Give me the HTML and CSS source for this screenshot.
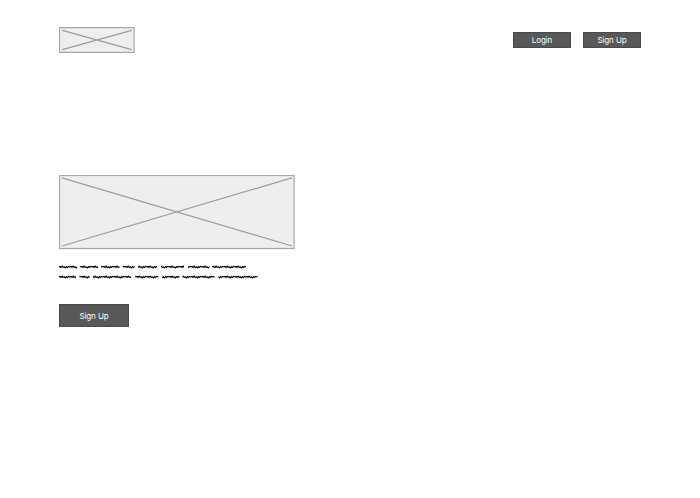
FILE: index.html
```html
<!DOCTYPE html>
<html lang="en">
<head>
<meta charset="utf-8">
<title>Landing wireframe</title>
<link rel="stylesheet" href="styles.css">
</head>
<body>
<header class="header">
  <svg class="logo" viewBox="0 0 76 26" aria-hidden="true">
    <rect class="box" x=".5" y=".6" width="74.6" height="24.8"/>
    <path class="cross" d="M3.3 3.3 72.7 22.7M3.3 22.7 72.7 3.3"/>
  </svg>
  <nav class="nav">
    <button class="btn">Login</button>
    <button class="btn">Sign Up</button>
  </nav>
</header>
<main class="main">
  <svg class="hero" viewBox="0 0 236 75" aria-hidden="true">
    <rect class="box" x=".5" y=".5" width="234.6" height="73"/>
    <path class="cross" d="M3 2.8 233 71M3 71 233 2.8"/>
  </svg>
  <svg class="scribble" viewBox="0 0 200 16" aria-hidden="true">
    <defs>
      <pattern id="wave" width="11" height="4" patternUnits="userSpaceOnUse">
        <path class="stroke" d="M-.5 2 1 1.5 2 2.4 3.2 1.2 4.2 2.3 5.4 2 6.4 2.9 7.6 1.6 8.6 2.4 9.6 1.3 11.5 2"/>
      </pattern>
    </defs>
    <g fill="url(#wave)">
      <rect width="18" height="4"/><rect x="21" width="18" height="4"/><rect x="42" width="18.5" height="4"/><rect x="64" width="11.5" height="4"/><rect x="79" width="19" height="4"/><rect x="102" width="23" height="4"/><rect x="129" width="21.5" height="4"/><rect x="153" width="34" height="4"/>
    </g>
    <g fill="url(#wave)" transform="translate(0 10)">
      <rect width="17" height="4"/><rect x="20.5" width="10" height="4"/><rect x="34" width="38" height="4"/><rect x="76" width="23.5" height="4"/><rect x="103" width="17.5" height="4"/><rect x="123.5" width="32" height="4"/><rect x="159.5" width="39" height="4"/>
    </g>
  </svg>
  <button class="btn btn-large">Sign Up</button>
</main>
</body>
</html>
```

FILE: styles.css
```css
* {
  box-sizing: border-box;
}

body {
  margin: 0;
  min-height: 498px;
  background: #fff;
  font-family: Inter, "Liberation Sans", sans-serif;
}

.header {
  display: flex;
  justify-content: space-between;
  align-items: flex-start;
  padding: 27px 59px 0;
}

.logo {
  width: 76px;
  height: 26px;
}

.nav {
  display: flex;
  gap: 12px;
  padding-top: 5px;
}

.box {
  fill: #eee;
  stroke: #a6a6a6;
  stroke-width: 1.2;
}

.cross {
  fill: none;
  stroke: #9c9c9c;
  stroke-width: 1.2;
}

.stroke {
  fill: none;
  stroke: #000;
  stroke-width: 1.15;
}

.btn {
  display: flex;
  align-items: center;
  justify-content: center;
  width: 58px;
  height: 16px;
  padding: 0;
  border: 1px solid #4a4a4a;
  background: #585858;
  color: #fff;
  font: 400 8px/1 Inter, "Liberation Sans", sans-serif;
  letter-spacing: -.08px;
}

.main {
  display: flex;
  flex-direction: column;
  align-items: flex-start;
  padding: 122px 59px 0;
}

.hero {
  width: 236px;
  height: 75px;
}

.scribble {
  width: 200px;
  height: 16px;
  margin-top: 15px;
}

.btn-large {
  width: 70px;
  height: 23px;
  margin-top: 23px;
}
```
